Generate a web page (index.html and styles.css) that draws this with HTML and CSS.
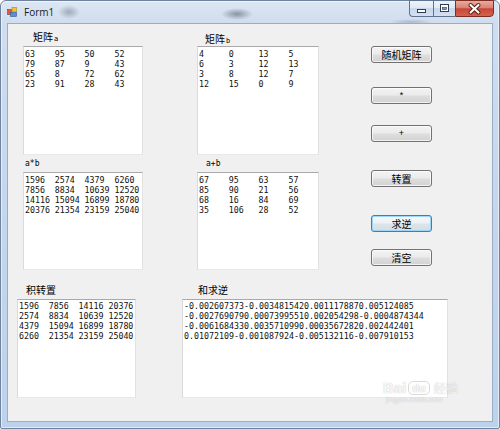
FILE: index.html
```html
<!DOCTYPE html>
<html lang="zh-CN">
<head>
<meta charset="utf-8">
<title>Form1</title>
<link rel="stylesheet" href="styles.css">
</head>
<body>
<div class="window">
  <div class="titlebar">
    <svg class="app-icon" width="10" height="10" viewBox="0 0 10 10">
      <rect x="0.5" y="2.5" width="4" height="5" fill="#e2563a" stroke="#9b3a22" stroke-width="0.6"/>
      <rect x="5" y="0.5" width="4.5" height="4.5" fill="#f2c233" stroke="#a88418" stroke-width="0.6"/>
      <rect x="3.5" y="5.5" width="6" height="4" fill="#5a8fd6" stroke="#2d5b9c" stroke-width="0.6"/>
    </svg>
    <span class="title">Form1</span>
    <div class="caption">
      <div class="cbtn cbtn-min">
        <svg width="24" height="17" viewBox="0 0 24 17"><rect x="8.5" y="9.5" width="8" height="3" fill="#fff" stroke="#2e3d52"/></svg>
      </div>
      <div class="cbtn cbtn-max">
        <svg width="22" height="17" viewBox="0 0 22 17"><rect x="7.5" y="4.5" width="8" height="7" fill="#fff" stroke="#2e3d52"/><rect x="9.5" y="7.5" width="4" height="2" fill="#8496b0" stroke="#2e3d52" stroke-width="0.6"/></svg>
      </div>
      <div class="cbtn cbtn-close">
        <svg width="39" height="17" viewBox="0 0 39 17"><path d="M15.5 5 L23.5 12.5 M23.5 5 L15.5 12.5" stroke="#4a1a12" stroke-width="4" stroke-linecap="round" fill="none"/><path d="M15.5 5 L23.5 12.5 M23.5 5 L15.5 12.5" stroke="#fff" stroke-width="2.2" stroke-linecap="round" fill="none"/></svg>
      </div>
    </div>
  </div>

  <div class="client">
    <div class="top">
      <div class="col col-a">
        <div class="label">矩阵<span class="lat">a</span></div>
        <div class="box box-tall">
          <div class="matrix">
            <span>63</span><span>95</span><span>50</span><span>52</span>
            <span>79</span><span>87</span><span>9</span><span>43</span>
            <span>65</span><span>8</span><span>72</span><span>62</span>
            <span>23</span><span>91</span><span>28</span><span>43</span>
          </div>
        </div>
        <div class="label label-sm">a*b</div>
        <div class="box box-mid">
          <div class="matrix">
            <span>1596</span><span>2574</span><span>4379</span><span>6260</span>
            <span>7856</span><span>8834</span><span>10639</span><span>12520</span>
            <span>14116</span><span>15094</span><span>16899</span><span>18780</span>
            <span>20376</span><span>21354</span><span>23159</span><span>25040</span>
          </div>
        </div>
      </div>

      <div class="col col-b">
        <div class="label label-b">矩阵<span class="lat">b</span></div>
        <div class="box box-tall">
          <div class="matrix">
            <span>4</span><span>0</span><span>13</span><span>5</span>
            <span>6</span><span>3</span><span>12</span><span>13</span>
            <span>3</span><span>8</span><span>12</span><span>7</span>
            <span>12</span><span>15</span><span>0</span><span>9</span>
          </div>
        </div>
        <div class="label label-sm label-sm-b">a+b</div>
        <div class="box box-mid">
          <div class="matrix">
            <span>67</span><span>95</span><span>63</span><span>57</span>
            <span>85</span><span>90</span><span>21</span><span>56</span>
            <span>68</span><span>16</span><span>84</span><span>69</span>
            <span>35</span><span>106</span><span>28</span><span>52</span>
          </div>
        </div>
      </div>

      <div class="buttons">
        <div class="btn btn-1">随机矩阵</div>
        <div class="btn btn-2 btn-sym">*</div>
        <div class="btn btn-3 btn-sym">+</div>
        <div class="btn btn-4">转置</div>
        <div class="btn btn-5 btn-focus">求逆</div>
        <div class="btn btn-6">清空</div>
      </div>
    </div>

    <div class="bottom">
      <div class="col col-c">
        <div class="label label-low">积转置</div>
        <div class="box box-low">
          <div class="matrix">
            <span>1596</span><span>7856</span><span>14116</span><span>20376</span>
            <span>2574</span><span>8834</span><span>10639</span><span>12520</span>
            <span>4379</span><span>15094</span><span>16899</span><span>18780</span>
            <span>6260</span><span>21354</span><span>23159</span><span>25040</span>
          </div>
        </div>
      </div>
      <div class="col col-d">
        <div class="label label-low label-d">和求逆</div>
        <div class="box box-low">
          <div class="lines">
            <div>-0.002607373-0.0034815420.0011178870.005124085</div>
            <div>-0.0027690790.00073995510.002054298-0.0004874344</div>
            <div>-0.0061684330.0035710990.00035672820.002442401</div>
            <div>0.01072109-0.001087924-0.005132116-0.007910153</div>
          </div>
        </div>
      </div>
    </div>

    <div class="watermark">
      <div class="wm-row">
        <span class="wm-bai">Bai</span>
        <span class="wm-du">du</span>
        <span class="wm-jy">经验</span>
      </div>
      <div class="wm-url">jingyan.baidu.com</div>
    </div>
  </div>
</div>
</body>
</html>
```

FILE: styles.css
```css
* { box-sizing: border-box; }

html, body {
  margin: 0;
  padding: 0;
}

body {
  width: 500px;
  height: 429px;
  overflow: hidden;
  background: #ffffff;
  font-family: "Noto Sans CJK SC", "Liberation Sans", sans-serif;
}

.window {
  width: 500px;
  height: 429px;
  display: flex;
  flex-direction: column;
  border: 1px solid #6f839e;
  border-radius: 6px 6px 2px 2px;
  background:
    radial-gradient(ellipse 11px 7px at 68px 11px, rgba(95, 105, 120, 0.45), rgba(95, 105, 120, 0)),
    radial-gradient(ellipse 16px 6px at 236px 13px, rgba(60, 70, 85, 0.5), rgba(60, 70, 85, 0)),
    radial-gradient(ellipse 22px 3px at 410px 21px, rgba(90, 100, 120, 0.3), rgba(90, 100, 120, 0)),
    linear-gradient(180deg, #dde7f3 0, #cfddef 22px, #c2d5ec 60%, #bdd2eb 100%);
  box-shadow: inset 0 0 0 1px rgba(255, 255, 255, 0.55);
}

/* ---------- title bar ---------- */
.titlebar {
  height: 23px;
  flex: none;
  display: flex;
  align-items: flex-start;
  padding-left: 6px;
}

.app-icon {
  margin-top: 6px;
  flex: none;
}

.title {
  margin-left: 7px;
  margin-top: 5px;
  font-family: "Open Sans", "Liberation Sans", sans-serif;
  font-size: 10px;
  line-height: 12px;
  color: #1a1a1a;
}

.caption {
  margin-left: auto;
  margin-right: 5px;
  margin-top: -1px;
  display: flex;
}

.cbtn {
  height: 17px;
  border: 1px solid #5f7391;
  display: flex;
}

.cbtn svg { display: block; margin: -1px; }

.cbtn-min {
  width: 24px;
  border-radius: 0 0 0 4px;
  border-right: none;
  background: linear-gradient(180deg, #eef3fa 0, #dfe8f4 45%, #c7d7ec 50%, #d3e0f0 100%);
}

.cbtn-max {
  width: 22px;
  border-right: none;
  background: linear-gradient(180deg, #eef3fa 0, #dfe8f4 45%, #c7d7ec 50%, #d3e0f0 100%);
}

.cbtn-close {
  width: 39px;
  border-color: #7d2d22;
  border-radius: 0 0 4px 0;
  background: linear-gradient(180deg, #e8aba1 0, #d88374 45%, #c7473a 52%, #d5614c 100%);
}

/* ---------- client area ---------- */
.client {
  flex: 1;
  margin: 0 7px 7px;
  background: #f0f0f0;
  box-shadow: 0 0 0 1px #98adc8;
  position: relative;
}

.top {
  display: flex;
  align-items: flex-start;
  padding-top: 6px;
}

.bottom {
  display: flex;
  align-items: flex-start;
  margin-top: 11px;
}

.col {
  display: flex;
  flex-direction: column;
}

.col-a { margin-left: 15px; width: 120px; }
.col-b { margin-left: 54px; width: 122px; }
.col-c { margin-left: 9px; width: 119px; }
.col-d { margin-left: 46px; width: 266px; }

.label {
  height: 16px;
  line-height: 14px;
  font-size: 10px;
  color: #000;
  padding-left: 10px;
  white-space: nowrap;
}

.label .lat {
  font-family: "DejaVu Sans Mono", monospace;
  font-size: 7px;
  margin-left: 1px;
}

.label-b {
  padding-left: 8px;
  padding-top: 2px;
  height: 16px;
  line-height: 14px;
}

.label-sm {
  height: 17px;
  padding-top: 3px;
  line-height: 12px;
  padding-left: 2px;
  font-family: "DejaVu Sans Mono", monospace;
  font-size: 8px;
}

.label-sm-b { padding-left: 9px; }

.label-low {
  height: 18px;
  padding-top: 2px;
  padding-left: 9px;
}

.label-d { padding-left: 16px; }

/* ---------- text boxes ---------- */
.box {
  background: #ffffff;
  border: 1px solid;
  border-color: #a9a9a9 #e2e2e2 #e8e8e8 #dadada;
  padding: 2px 1px;
  font-family: "DejaVu Sans Mono", monospace;
  font-size: 8.3px;
  line-height: 10px;
  color: #111;
}

.box-tall { height: 109px; }
.box-mid { height: 98px; }
.box-low { height: 99px; padding-top: 1px; }

.matrix {
  display: grid;
  grid-template-columns: repeat(4, 29.8px);
}

.lines div { white-space: pre; }

/* ---------- buttons ---------- */
.buttons {
  margin-left: 52px;
  display: flex;
  flex-direction: column;
}

.btn {
  width: 61px;
  height: 17px;
  border: 1px solid #727272;
  border-radius: 3px;
  background: linear-gradient(180deg, #f3f3f3 0, #ebebeb 48%, #dedede 52%, #d2d2d2 100%);
  box-shadow: inset 0 0 0 1px rgba(255, 255, 255, 0.7);
  font-size: 10px;
  line-height: 15px;
  text-align: center;
  color: #000;
}

.btn-sym {
  font-family: "Liberation Sans", sans-serif;
  font-size: 9px;
}

.btn-focus {
  border-color: #3c7fb1;
  box-shadow: inset 0 0 0 1px #9ed6f5;
  background: linear-gradient(180deg, #f4f8fb 0, #ecf1f5 48%, #dde5ea 52%, #d4dde3 100%);
}

.btn-1 { margin-top: 16px; }
.btn-2 { margin-top: 24px; }
.btn-3 { margin-top: 21px; }
.btn-4 { margin-top: 28px; }
.btn-5 { margin-top: 28px; }
.btn-6 { margin-top: 17px; }

/* ---------- watermark overlay ---------- */
.watermark {
  position: absolute;
  left: 375px;
  top: 356px;
  opacity: 0.75;
  color: rgba(255, 255, 255, 0.9);
  text-shadow: 0 0 1px rgba(110, 110, 110, 0.7);
  pointer-events: none;
}

.wm-row {
  display: flex;
  align-items: flex-end;
  gap: 2px;
}

.wm-bai {
  font-family: "Liberation Sans", sans-serif;
  font-weight: bold;
  font-size: 15px;
  line-height: 15px;
}

.wm-du {
  font-family: "Liberation Sans", sans-serif;
  font-weight: bold;
  font-size: 11px;
  line-height: 12px;
  padding: 0 3px;
  border-radius: 5px;
  border: 1px solid rgba(160, 160, 160, 0.5);
}

.wm-jy {
  font-size: 12px;
  line-height: 14px;
  margin-left: 2px;
}

.wm-url {
  font-family: "Liberation Sans", sans-serif;
  font-size: 7px;
  line-height: 8px;
  margin-top: 1px;
  padding-left: 3px;
}
```
